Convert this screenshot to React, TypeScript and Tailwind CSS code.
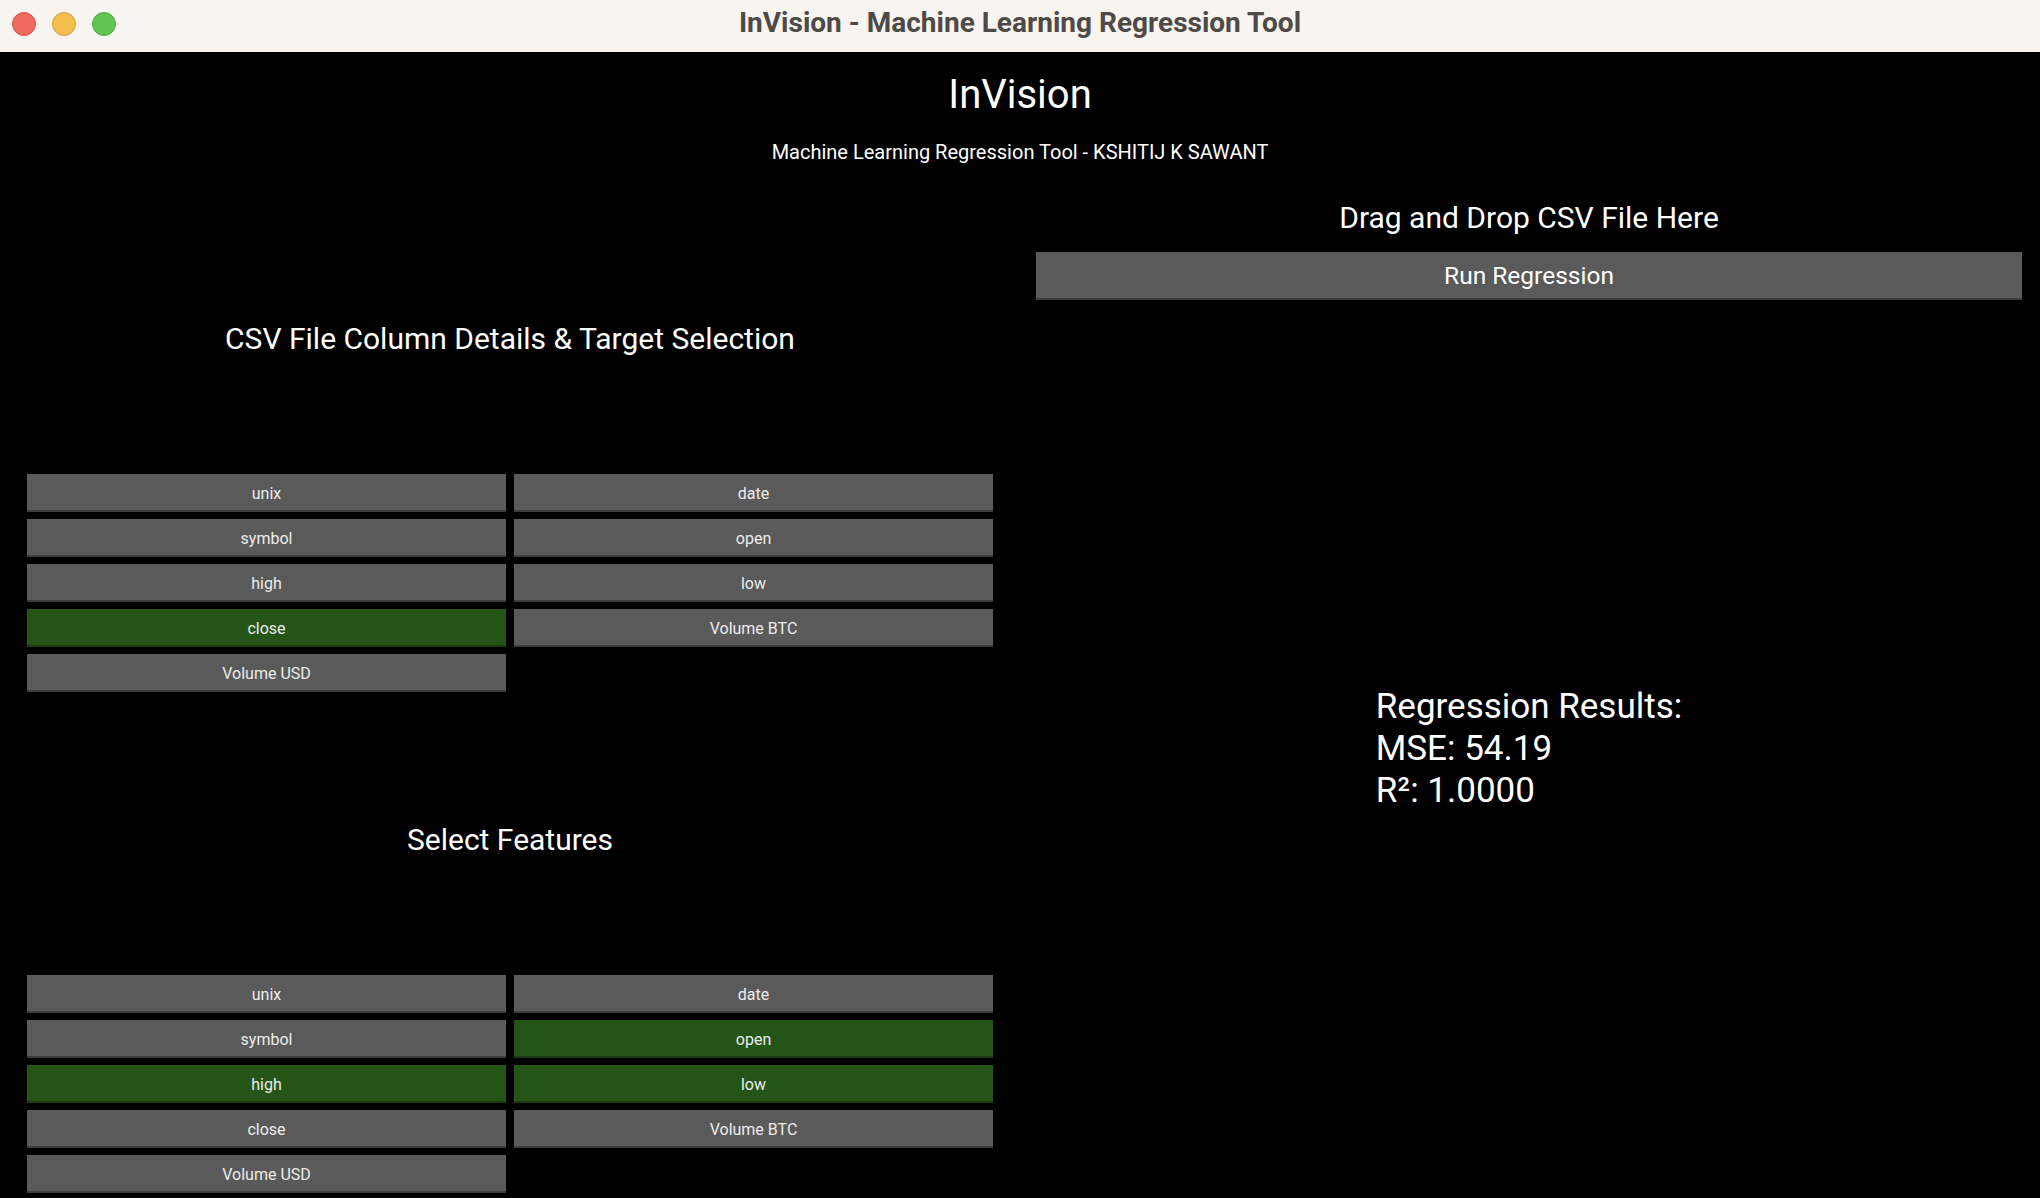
import React from "react";

const columns = ["unix", "date", "symbol", "open", "high", "low", "close", "Volume BTC", "Volume USD"];

function ColButton({ label, active }: { label: string; active: boolean }) {
  return (
    <div
      className={
        "h-[38px] pt-[3px] flex items-center justify-center text-[16px] text-[#ececec] border-b-2 " +
        (active ? "bg-[#245517] border-[#1a3a12]" : "bg-[#5a5a5a] border-[#3d3d3d]")
      }
    >
      {label}
    </div>
  );
}

function ColGrid({ active }: { active: string[] }) {
  return (
    <div className="grid grid-cols-2 gap-x-[8px] gap-y-[7px]">
      {columns.map((c) => (
        <ColButton key={c} label={c} active={active.includes(c)} />
      ))}
    </div>
  );
}

export default function App() {
  return (
    <div className="w-[2040px] h-[1198px] flex flex-col bg-black overflow-hidden" style={{ fontFamily: "Roboto, 'Noto Sans', sans-serif" }}>
      {/* Title bar */}
      <div className="h-[52px] shrink-0 bg-[#f8f4f0] relative flex items-center justify-center">
        <div className="absolute left-[12px] top-[12px] flex gap-[16px]">
          <div className="w-[24px] h-[24px] rounded-full bg-[#ee6a5f] border border-[#d5544a]" />
          <div className="w-[24px] h-[24px] rounded-full bg-[#f5bf4f] border border-[#d9a23c]" />
          <div className="w-[24px] h-[24px] rounded-full bg-[#61c554] border border-[#4fa83f]" />
        </div>
        <div className="text-[28px] font-bold text-[#4d4a48] leading-none -mt-[6px]">
          InVision - Machine Learning Regression Tool
        </div>
      </div>

      {/* Content */}
      <div className="flex-1 flex flex-col text-white">
        <div className="pt-[19px] text-center text-[40px] leading-[48px]">InVision</div>
        <div className="mt-[21px] text-center text-[20px] leading-[24px]">
          Machine Learning Regression Tool - KSHITIJ K SAWANT
        </div>

        <div className="mt-[36px] flex flex-1">
          {/* Left column */}
          <div className="w-[1020px] px-[27px] flex flex-col">
            <div className="mt-[121px] h-[36px] text-center text-[30px] leading-[36px]">
              CSV File Column Details &amp; Target Selection
            </div>
            <div className="mt-[117px]">
              <ColGrid active={["close"]} />
            </div>
            <div className="mt-[130px] h-[36px] text-center text-[30px] leading-[36px]">Select Features</div>
            <div className="mt-[117px]">
              <ColGrid active={["open", "high", "low"]} />
            </div>
          </div>

          {/* Right column */}
          <div className="w-[1020px] pl-[16px] pr-[18px] flex flex-col">
            <div className="h-[36px] text-center text-[30px] leading-[36px]">Drag and Drop CSV File Here</div>
            <div className="mt-[16px] h-[48px] pt-[3px] bg-[#5a5a5a] border-b-2 border-[#3d3d3d] flex items-center justify-center text-[24.5px]">
              Run Regression
            </div>
            <div className="mt-[386px] flex justify-center">
              <div className="text-[35px] leading-[42px]">
                <div>Regression Results:</div>
                <div>MSE: 54.19</div>
                <div>R²: 1.0000</div>
              </div>
            </div>
          </div>
        </div>
      </div>
    </div>
  );
}
